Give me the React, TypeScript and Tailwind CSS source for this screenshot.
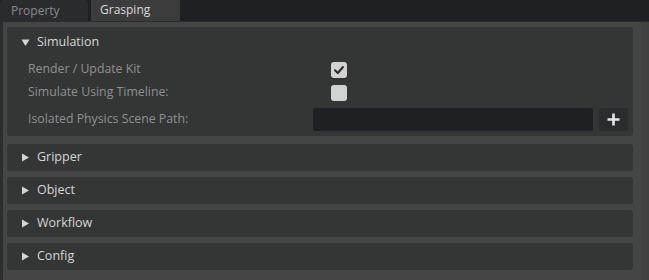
import React from 'react';

// --- Small drawings ---
function Caret({ open }: { open: boolean }) {
  return (
    <svg width="9" height="9" viewBox="0 0 9 9" className="shrink-0">
      {open ? <polygon points="0.5,1.5 8.5,1.5 4.5,8" fill="#d4d4d4" /> : <polygon points="1,0.5 8,4.5 1,8.5" fill="#d4d4d4" />}
    </svg>
  );
}

function CheckBox({ checked }: { checked: boolean }) {
  return (
    <div className="w-[16px] h-[16px] rounded-[3px] bg-[#d2d2d2] flex items-center justify-center">
      {checked && (
        <svg width="12" height="12" viewBox="0 0 12 12">
          <path d="M2 6.3 L4.8 9 L10 3" fill="none" stroke="#2a2a2a" strokeWidth="2" strokeLinecap="round" strokeLinejoin="round" />
        </svg>
      )}
    </div>
  );
}

function CollapsedFrame({ title }: { title: string }) {
  return (
    <div className="h-[27px] rounded-[3px] bg-[#343535] flex items-center pl-[14px] gap-[7px]">
      <Caret open={false} />
      <span className="text-[12.5px] font-medium text-[#d6d6d6]">{title}</span>
    </div>
  );
}

export default function App() {
  return (
    <div className="w-[649px] h-[280px] flex flex-col bg-[#454545] overflow-hidden" style={{ fontFamily: '"Open Sans", sans-serif' }}>
      {/* --- TAB BAR --- */}
      <div className="h-[22px] flex items-end bg-[#1f2023] border-b border-[#2b2c2e] shrink-0">
        <div className="w-[88px] h-[21px] bg-[#2a2b2d] rounded-t-[3px] flex items-center pl-[11px] text-[12px] font-medium text-[#8a8a8a]">Property</div>
        <div className="w-[89px] h-[22px] ml-[3px] bg-[#3c3c3c] rounded-t-[3px] flex items-center pl-[9px] text-[12px] font-medium text-[#dadada]">Grasping</div>
      </div>

      {/* --- CONTENT --- */}
      <div className="flex-1 flex">
        <div className="w-[3px] bg-[#2d2d2d]" />
        <div className="flex-1 flex flex-col pl-[4px] pr-[8px] pt-[5px]">
          {/* Simulation */}
          <div className="rounded-[3px] bg-[#343535] flex flex-col pb-[5px]">
            <div className="h-[30px] flex items-center pl-[14px] gap-[7px]">
              <Caret open={true} />
              <span className="text-[12.5px] font-medium text-[#d6d6d6]">Simulation</span>
            </div>
            <div className="pt-[1px] flex flex-col text-[12.3px] font-medium text-[#909090]">
              <div className="h-[23px] flex items-center pl-[21px]">
                <span className="w-[303px]">Render / Update Kit</span>
                <CheckBox checked={true} />
              </div>
              <div className="h-[23px] flex items-center pl-[21px]">
                <span className="w-[303px]">Simulate Using Timeline:</span>
                <CheckBox checked={false} />
              </div>
              <div className="h-[23px] mt-[4px] flex items-center pl-[21px] pr-[5px]">
                <span className="w-[285px]">Isolated Physics Scene Path:</span>
                <div className="flex-1 h-[23px] bg-[#1f2023] rounded-[2px]" />
                <div className="w-[29px] h-[23px] ml-[6px] bg-[#2b2c2d] rounded-[2px] flex items-center justify-center">
                  <svg width="15" height="15" viewBox="0 0 15 15">
                    <path d="M7.5 1.5 V13.5 M1.5 7.5 H13.5" stroke="#e6e6e6" strokeWidth="2.6" />
                  </svg>
                </div>
              </div>
            </div>
          </div>

          <div className="mt-[8px] flex flex-col gap-[6px]">
            <CollapsedFrame title="Gripper" />
            <CollapsedFrame title="Object" />
            <CollapsedFrame title="Workflow" />
            <CollapsedFrame title="Config" />
          </div>
        </div>
        <div className="w-[8px] bg-[#404040]" />
      </div>
    </div>
  );
}
